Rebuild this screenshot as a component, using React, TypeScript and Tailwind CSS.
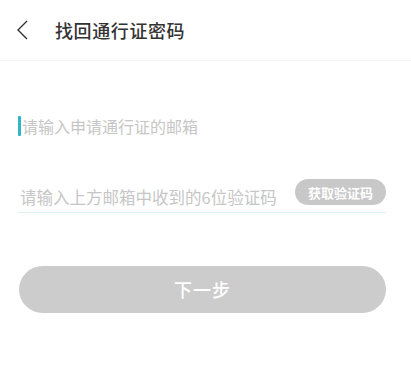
import React, { useState } from 'react';

const font = { fontFamily: '"Noto Sans CJK SC", "Noto Sans", sans-serif' };

const App: React.FC = () => {
  const [email, setEmail] = useState('');
  const [code, setCode] = useState('');

  return (
    <div className="w-[411px] h-[392px] bg-white" style={font}>
      {/* header */}
      <div className="h-[61px] flex items-center border-b border-[#f3f3f3]">
        <button className="ml-[15px] w-[14px] h-[22px] flex items-center justify-center text-[#333]">
          <svg width="12" height="20" viewBox="0 0 12 20" fill="none">
            <path d="M11 1 L2 10 L11 19" stroke="#333" strokeWidth="1.4" strokeLinejoin="miter" />
          </svg>
        </button>
        <h1 className="ml-[26px] text-[18px] font-medium text-[#333] tracking-[0.6px] leading-none">找回通行证密码</h1>
      </div>

      <div className="ml-[18px] mr-[25px]">
        {/* email */}
        <div className="mt-[54px] h-[22px] flex items-center">
          <span className="w-[3px] h-[20px] bg-[#2fb6c9] rounded-[1px]" />
          <input
            value={email}
            onChange={(e) => setEmail(e.target.value)}
            placeholder="请输入申请通行证的邮箱"
            className="flex-1 ml-[1px] bg-transparent outline-none text-[16px] text-[#333] placeholder:text-[#c6c6c6]"
          />
        </div>

        {/* code */}
        <div className="mt-[41px] h-[35px] flex items-center border-b border-[#d9f0ef]">
          <input
            value={code}
            onChange={(e) => setCode(e.target.value)}
            placeholder="请输入上方邮箱中收到的6位验证码"
            className="flex-1 ml-[2px] mt-[5px] bg-transparent outline-none text-[16.5px] text-[#333] placeholder:text-[#c6c6c6]"
          />
          <button className="w-[91px] h-[26px] mb-[6px] rounded-full bg-[#c8c8c8] text-white text-[13px] font-bold leading-none">
            获取验证码
          </button>
        </div>

        {/* next */}
        <button className="mt-[53px] ml-[1px] w-[367px] h-[47px] rounded-full bg-[#cccccc] text-white text-[18px] font-medium tracking-[1px]">
          下一步
        </button>
      </div>
    </div>
  );
};

export default App;
